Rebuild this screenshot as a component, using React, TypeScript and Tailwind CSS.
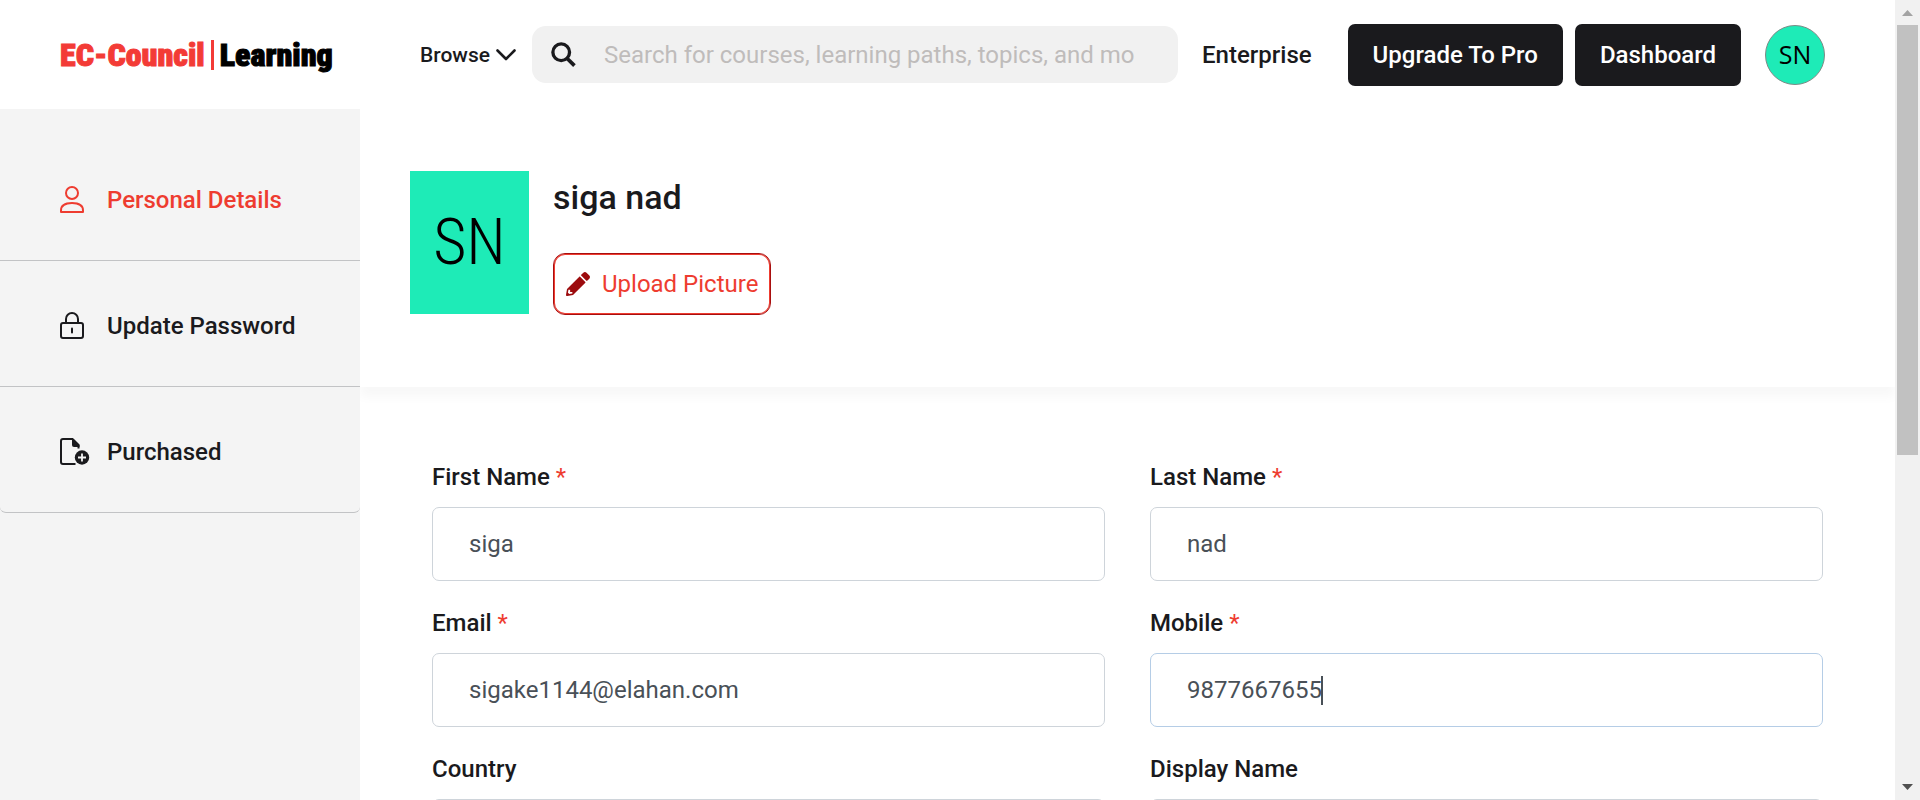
import { useEffect, useRef } from "react";

const ROBOTO = "font-['Roboto','Liberation_Sans',sans-serif]";

function Logo() {
  return (
    <a href="#" aria-label="EC-Council Learning" className="flex w-[300px] shrink-0 items-center whitespace-nowrap font-['Impact','Roboto_Condensed','Liberation_Sans_Narrow',sans-serif] text-[32px] leading-[44px] font-black [-webkit-text-stroke:1px_currentColor]">
      <span className="text-[#f33b36]">EC-Council</span>
      <span className="mx-[6px] h-[30px] w-[3px] bg-[#f33b36]" />
      <span className="text-black">Learning</span>
    </a>
  );
}

function Header() {
  return (
    <header className="flex h-[109px] items-center bg-white pr-[70px] pl-[60px]">
      <Logo />
      <button className="ml-[60px] flex shrink-0 items-center gap-[6px] text-[21px] leading-7 font-medium whitespace-nowrap">
        <span>Browse</span>
        <svg width="20" height="12" viewBox="0 0 20 12" fill="none" stroke="currentColor" strokeWidth="2.6">
          <path d="M1.500 1.500 10 10 18.500 1.500" strokeLinecap="round" strokeLinejoin="round" />
        </svg>
      </button>
      <label className="ml-4 flex h-[57px] min-w-0 flex-1 items-center rounded-[14px] bg-[#f1f1f1] px-[19px]">
        <svg width="25" height="25" viewBox="0 0 24 24" fill="none" stroke="#1a1a1d" strokeWidth="3.2" className="shrink-0">
          <circle cx="9.8" cy="9.8" r="8" />
          <path d="m15.3 15.6 7.2 7" strokeWidth="3.6" />
        </svg>
        <span className="sr-only">Search</span>
        <input type="text" placeholder="Search for courses, learning paths, topics, and mo" className="ml-7 min-w-0 flex-1 bg-transparent text-[24px] leading-7 outline-none placeholder:text-[#bfbcbb]" />
      </label>
      <a href="#" className="ml-6 text-[24px] leading-7 font-medium">Enterprise</a>
      <button className="ml-9 h-[62px] rounded-[7px] bg-[#1a1a1d] px-[25px] text-[24px] font-medium text-white">Upgrade To Pro</button>
      <button className="ml-3 h-[62px] rounded-[7px] bg-[#1a1a1d] px-[25px] text-[24px] font-medium text-white">Dashboard</button>
      <button className="ml-6 flex size-[60px] items-center justify-center rounded-full border border-[#7d8a86] bg-[#1eebb7] font-['Open_Sans','Noto_Sans',sans-serif] text-[25px] text-black">SN</button>
    </header>
  );
}

function PersonIcon() {
  return (
    <svg width="24" height="28" viewBox="0 0 24 28" fill="none" stroke="currentColor" strokeWidth="2">
      <circle cx="12" cy="7" r="6" />
      <path d="M1 26v-1.500C1 19.500 5.500 17 12 17s11 2.500 11 7.500V26z" strokeLinejoin="round" />
    </svg>
  );
}

function LockIcon() {
  return (
    <svg width="24" height="28" viewBox="0 0 24 28" fill="none" stroke="currentColor" strokeWidth="2">
      <rect x="1" y="11" width="22" height="15" rx="2" />
      <path d="M6 11V7a6 6 0 0 1 12 0v4" />
      <path d="M12 16.500v4" strokeLinecap="round" />
    </svg>
  );
}

function FileAddIcon() {
  return (
    <svg width="30" height="28" viewBox="0 0 30 28" fill="none">
      <path d="M15.500 26H3a2 2 0 0 1-2-2V3a2 2 0 0 1 2-2h9.500L18.500 7v3.500" stroke="currentColor" strokeWidth="2" />
      <path d="M12 1h1.500l6 6v2H14a2 2 0 0 1-2-2z" fill="currentColor" />
      <circle cx="22" cy="19.500" r="7.200" fill="currentColor" />
      <path d="M22 15.500v8M18 19.500h8" stroke="#f4f4f4" strokeWidth="1.800" />
    </svg>
  );
}

const ITEM = "flex h-[126px] items-center border-b border-[#c2c3c5] pt-1 pl-[60px] text-[24px] leading-7 font-medium";

function Sidebar() {
  return (
    <nav className="w-[360px] shrink-0 bg-[#f4f4f4] pt-[26px]">
      <a href="#" className={ITEM + " text-[#ee3c30]"}>
        <span className="w-[47px]"><PersonIcon /></span>Personal Details
      </a>
      <a href="#" className={ITEM}>
        <span className="w-[47px]"><LockIcon /></span>Update Password
      </a>
      <a href="#" className={ITEM + " rounded-b-[6px]"}>
        <span className="w-[47px]"><FileAddIcon /></span>Purchased
      </a>
    </nav>
  );
}

function Profile() {
  return (
    <section className="flex h-[278px] gap-6 bg-white pt-[62px] pl-[50px] shadow-[0_10px_10px_rgba(0,0,0,0.03)]">
      <div className="flex h-[143px] w-[119px] items-center justify-center bg-[#1eebb7] font-['Roboto_Condensed','Liberation_Sans_Narrow',sans-serif] text-[64px] leading-none font-light text-black">SN</div>
      <div className="flex flex-col items-start">
        <h1 className="pt-[6px] text-[34px] leading-10 font-medium">siga nad</h1>
        <button className="mt-9 flex h-[62px] items-center gap-3 rounded-[12px] border border-[#a80f0f] px-3 text-[24px] text-[#ee3c30] inset-ring inset-ring-[#ee3c30]">
          <svg width="24" height="24" viewBox="0 0 512 512" fill="#9c0b0d">
            <path d="M497.900 142.100l-46.100 46.100c-4.700 4.700-12.300 4.700-17 0l-111-111c-4.700-4.700-4.700-12.300 0-17l46.100-46.100c18.700-18.700 49.100-18.700 67.900 0l60.100 60.100c18.800 18.700 18.800 49.100 0 67.900zM284.200 99.800L21.600 362.400.4 483.900c-2.900 16.400 11.400 30.600 27.800 27.800l121.500-21.300 262.600-262.600c4.700-4.700 4.700-12.300 0-17l-111-111c-4.800-4.700-12.400-4.700-17.100 0zM88 424h48v36.300l-64.500 11.300-31.100-31.100L51.700 376H88v48z" />
          </svg>
          Upload Picture
        </button>
      </div>
    </section>
  );
}

type FieldProps = { id: string; label: string; value: string; required?: boolean; focused?: boolean };

function Field({ id, label, value, required, focused }: FieldProps) {
  const ref = useRef<HTMLInputElement>(null);
  useEffect(() => {
    if (focused && ref.current) {
      ref.current.focus();
      ref.current.setSelectionRange(value.length, value.length);
    }
  }, [focused, value]);
  return (
    <div className="flex flex-col gap-4">
      <label htmlFor={id} className="text-[24px] leading-7 font-medium">
        {label}
        {required && <span className="font-normal text-[#ee3c30]"> *</span>}
      </label>
      <div className="relative">
        <input ref={ref} id={id} type="text" defaultValue={value} className="block h-[74px] w-full rounded-[7px] border border-[#ced4da] bg-white px-9 text-[24px] text-[#495057] caret-transparent outline-none focus:border-[#b5cde6]" />
        {focused && <span aria-hidden="true" className="absolute top-[23px] left-[171px] h-[29px] w-[2px] bg-[#495057]" />}
      </div>
    </div>
  );
}

function DetailsForm() {
  return (
    <form className="grid grid-cols-2 gap-x-[45px] gap-y-7 pt-[76px] pr-[72px] pl-[72px]">
      <Field id="first" label="First Name" value="siga" required />
      <Field id="last" label="Last Name" value="nad" required />
      <Field id="email" label="Email" value="sigake1144@elahan.com" required />
      <Field id="mobile" label="Mobile" value="9877667655" required focused />
      <Field id="country" label="Country" value="" />
      <Field id="display" label="Display Name" value="" />
    </form>
  );
}

function ScrollRail() {
  return (
    <div aria-hidden="true" className="flex w-[25px] shrink-0 flex-col items-center bg-[#f1f1f1]">
      <svg width="25" height="25" viewBox="0 0 25 25"><path d="M7 16h11l-5.500-6z" fill="#a3a3a3" /></svg>
      <div className="h-[430px] w-[21px] bg-[#c1c1c1]" />
      <svg width="25" height="25" viewBox="0 0 25 25" className="mt-auto"><path d="M7 9h11l-5.500 6z" fill="#505050" /></svg>
    </div>
  );
}

export default function App() {
  return (
    <div className={"flex h-screen overflow-hidden bg-white text-[#1a1a1d] " + ROBOTO}>
      <div className="flex min-w-0 flex-1 flex-col">
        <Header />
        <div className="flex min-h-0 flex-1">
          <Sidebar />
          <main className="min-w-0 flex-1 overflow-hidden">
            <Profile />
            <DetailsForm />
          </main>
        </div>
      </div>
      <ScrollRail />
    </div>
  );
}
